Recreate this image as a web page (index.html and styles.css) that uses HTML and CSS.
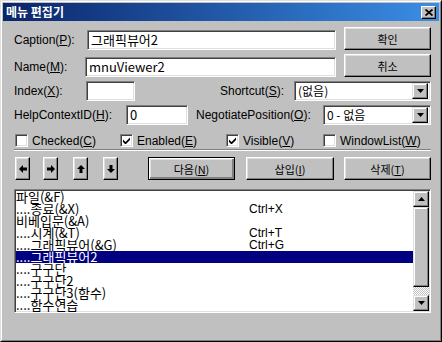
FILE: index.html
```html
<!DOCTYPE html>
<html>
<head>
	<meta charset="UTF-8">
	<title>메뉴 편집기</title>
	<link rel="stylesheet" href="styles.css">
</head>
<body>
<div class="window">
<div class="frame">

	<div class="titlebar">
		<span class="title">메뉴 편집기</span>
		<span class="close"><svg width="8" height="7" viewBox="0 0 8 7"><path d="M0.5 0.5 L7.5 6.5 M7.5 0.5 L0.5 6.5" stroke="#000" stroke-width="1.8"/></svg></span>
	</div>

	<div class="content">

		<div class="row top">
			<span class="lbl w-cap">Caption(<u>P</u>):</span>
			<div class="edit e-cap">그래픽뷰어2</div>
			<div class="btn b-side">확인</div>
		</div>

		<div class="row top r2">
			<span class="lbl w-name">Name(<u>M</u>):</span>
			<div class="edit e-name">mnuViewer2</div>
			<div class="btn b-side">취소</div>
		</div>

		<div class="row mid r3">
			<span class="lbl w-idx">Index(<u>X</u>):</span>
			<div class="edit e-idx"></div>
			<span class="lbl w-short">Shortcut(<u>S</u>):</span>
			<div class="edit combo c-short"><span class="val">(없음)</span><span class="drop"><svg width="7" height="4" viewBox="0 0 7 4"><polygon points="0,0 7,0 3.5,4" fill="#000"/></svg></span></div>
		</div>

		<div class="row mid r4">
			<span class="lbl w-help">HelpContextID(<u>H</u>):</span>
			<div class="edit e-help">0</div>
			<span class="lbl w-neg">NegotiatePosition(<u>O</u>):</span>
			<div class="edit combo c-neg"><span class="val">0 - 없음</span><span class="drop"><svg width="7" height="4" viewBox="0 0 7 4"><polygon points="0,0 7,0 3.5,4" fill="#000"/></svg></span></div>
		</div>

		<div class="row checks">
			<label class="chk k1"><span class="box"></span>Checked(<u>C</u>)</label>
			<label class="chk k2"><span class="box"><svg width="7" height="7" viewBox="0 0 7 7"><polygon points="0,2.5 2.5,5 7,0.5 7,3 2.5,7.5 0,5" fill="#000"/></svg></span>Enabled(<u>E</u>)</label>
			<label class="chk k3"><span class="box"><svg width="7" height="7" viewBox="0 0 7 7"><polygon points="0,2.5 2.5,5 7,0.5 7,3 2.5,7.5 0,5" fill="#000"/></svg></span>Visible(<u>V</u>)</label>
			<label class="chk k4"><span class="box"></span>WindowList(<u>W</u>)</label>
		</div>

		<div class="sep"></div>

		<div class="row buttons">
			<div class="btn arrow a1"><svg width="8" height="8" viewBox="0 0 8 8"><polygon points="0,4 4,0 4,2.5 8,2.5 8,5.5 4,5.5 4,8" fill="#000"/></svg></div>
			<div class="btn arrow a2"><svg class="rot-r" width="8" height="8" viewBox="0 0 8 8"><polygon points="0,4 4,0 4,2.5 8,2.5 8,5.5 4,5.5 4,8" fill="#000"/></svg></div>
			<div class="btn arrow a3"><svg class="rot-u" width="8" height="8" viewBox="0 0 8 8"><polygon points="0,4 4,0 4,2.5 8,2.5 8,5.5 4,5.5 4,8" fill="#000"/></svg></div>
			<div class="btn arrow a4"><svg class="rot-d" width="8" height="8" viewBox="0 0 8 8"><polygon points="0,4 4,0 4,2.5 8,2.5 8,5.5 4,5.5 4,8" fill="#000"/></svg></div>
			<div class="btn def b-next">다음(<u>N</u>)</div>
			<div class="btn b-ins">삽입(<u>I</u>)</div>
			<div class="btn b-del">삭제(<u>T</u>)</div>
		</div>

		<div class="list">
			<div class="items">
				<div class="item"><span class="cap">파일(&amp;F)</span></div>
				<div class="item"><span class="cap">....종료(&amp;X)</span><span class="key">Ctrl+X</span></div>
				<div class="item"><span class="cap">비베입문(&amp;A)</span></div>
				<div class="item"><span class="cap">....시계(&amp;T)</span><span class="key">Ctrl+T</span></div>
				<div class="item"><span class="cap">....그래픽뷰어(&amp;G)</span><span class="key">Ctrl+G</span></div>
				<div class="item sel"><span class="cap">....그래픽뷰어2</span></div>
				<div class="item"><span class="cap">....구구단</span></div>
				<div class="item"><span class="cap">....구구단2</span></div>
				<div class="item"><span class="cap">....구구단3(함수)</span></div>
				<div class="item"><span class="cap">....함수연습</span></div>
			</div>
			<div class="vscroll">
				<div class="sbtn"><svg width="7" height="4" viewBox="0 0 7 4"><polygon points="0,4 7,4 3.5,0" fill="#000"/></svg></div>
				<div class="thumb"></div>
				<div class="track"></div>
				<div class="sbtn"><svg width="7" height="4" viewBox="0 0 7 4"><polygon points="0,0 7,0 3.5,4" fill="#000"/></svg></div>
			</div>
		</div>

	</div>
</div>
</div>
</body>
</html>
```

FILE: styles.css
```css
body {
	margin: 0;
	font-family: "Liberation Sans", "Noto Sans CJK KR", sans-serif;
	font-size: 12px;
	color: #000;
}

.window {
	width: 442px;
	height: 342px;
	box-sizing: border-box;
	border: 1px solid;
	border-color: #dfdfdf #000 #000 #dfdfdf;
	background: #c0c0c0;
}

.frame {
	height: 100%;
	box-sizing: border-box;
	border: 1px solid;
	border-color: #fff #808080 #808080 #fff;
	padding: 1px;
}

/* title */
.titlebar {
	height: 18px;
	display: flex;
	align-items: center;
	justify-content: space-between;
	padding: 0 3px 0 3px;
	background: linear-gradient(to right, #0a246a, #3a8ee6);
	color: #fff;
}

.title {
	font-family: "Noto Sans CJK KR", sans-serif;
	font-weight: bold;
	font-size: 12px;
	line-height: 18px;
}

.close {
	width: 15px;
	height: 13px;
	box-sizing: border-box;
	display: flex;
	align-items: center;
	justify-content: center;
	background: #c0c0c0;
	border: 1px solid;
	border-color: #fff #000 #000 #fff;
	box-shadow: inset -1px -1px #808080;
}

/* common controls */
.content {
	padding: 6px 8px 0 11px;
}

.row {
	display: flex;
}

.lbl {
	white-space: nowrap;
}

.edit {
	box-sizing: border-box;
	height: 20px;
	background: #fff;
	border: 1px solid;
	border-color: #808080 #fff #fff #808080;
	box-shadow: inset 1px 1px #404040, inset -1px -1px #dfdfdf;
	padding-left: 3px;
	line-height: 18px;
	font-family: "Noto Sans CJK KR", "Liberation Sans", sans-serif;
	font-size: 13px;
	white-space: nowrap;
	overflow: hidden;
}

.btn {
	box-sizing: border-box;
	height: 23px;
	background: #c0c0c0;
	border: 1px solid;
	border-color: #fff #000 #000 #fff;
	box-shadow: inset -1px -1px #808080, inset 1px 1px #dfdfdf;
	display: flex;
	align-items: center;
	justify-content: center;
	font-family: "Noto Sans CJK KR", "Liberation Sans", sans-serif;
	font-size: 11px;
}

.btn.def {
	border-color: #000;
	box-shadow: inset 1px 1px #fff, inset -2px -2px #808080, inset 2px 2px #dfdfdf;
}

/* rows */
.row.top {
	height: 23px;
}

.row.top .lbl {
	margin-top: 3px;
	line-height: 20px;
}

.row.top .edit {
	margin-top: 3px;
}

.r2 {
	margin-top: 4px;
}

.w-cap { width: 73px; }
.e-cap { width: 249px; }
.w-name { width: 71px; }
.e-name { width: 251px; }

.b-side {
	width: 87px;
	margin-left: 8px;
}

.row.mid {
	height: 20px;
	align-items: center;
}

.r3 { margin-top: 4px; }
.r4 { margin-top: 4px; }

.w-idx { width: 72px; }
.e-idx { width: 49px; }
.w-short { width: 74px; margin-left: 85px; }
.c-short { width: 137px; }

.w-help { width: 112px; }
.e-help { width: 62px; }
.w-neg { width: 127px; margin-left: 8px; }
.c-neg { width: 108px; }

.combo {
	display: flex;
	justify-content: space-between;
	padding-right: 2px;
	font-size: 12px;
}

.drop {
	width: 16px;
	height: 16px;
	margin-top: 1px;
	box-sizing: border-box;
	background: #c0c0c0;
	border: 1px solid;
	border-color: #dfdfdf #000 #000 #dfdfdf;
	box-shadow: inset -1px -1px #808080, inset 1px 1px #fff;
	display: flex;
	align-items: center;
	justify-content: center;
}

/* check boxes */
.checks {
	margin-top: 9px;
	height: 13px;
	align-items: center;
}

.chk {
	display: flex;
	align-items: center;
	white-space: nowrap;
}

.k1 { margin-left: 1px; width: 105px; }
.k2 { width: 106px; }
.k3 { width: 97px; }

.box {
	width: 13px;
	height: 13px;
	box-sizing: border-box;
	margin-right: 4px;
	background: #fff;
	border: 1px solid;
	border-color: #808080 #fff #fff #808080;
	box-shadow: inset 1px 1px #404040, inset -1px -1px #dfdfdf;
	display: flex;
	align-items: center;
	justify-content: center;
}

.sep {
	margin-top: 2px;
	height: 1px;
	background: #808080;
	border-bottom: 1px solid #fff;
}

/* buttons row */
.buttons {
	margin-top: 6px;
}

.arrow {
	width: 15px;
}

.a1 { margin-left: 1px; }
.a2 { margin-left: 13px; }
.a3 { margin-left: 15px; }
.a4 { margin-left: 15px; }

.rot-r { transform: rotate(180deg); }
.rot-u { transform: rotate(90deg); }
.rot-d { transform: rotate(-90deg); }

.b-next { width: 87px; margin-left: 30px; }
.b-ins { width: 88px; margin-left: 11px; }
.b-del { width: 87px; margin-left: 10px; }

/* list */
.list {
	margin-top: 9px;
	height: 124px;
	box-sizing: border-box;
	display: flex;
	background: #fff;
	border: 1px solid;
	border-color: #808080 #fff #fff #808080;
	box-shadow: inset 1px 1px #404040, inset -1px -1px #dfdfdf;
	padding: 1px;
}

.items {
	flex: 1;
	font-family: "Noto Sans CJK KR", "Liberation Sans", sans-serif;
	font-size: 13px;
}

.item {
	height: 12px;
	line-height: 12px;
	display: flex;
	white-space: nowrap;
}

.item .cap {
	width: 233px;
}

.item .key {
	font-family: "Liberation Sans", sans-serif;
	font-size: 12px;
}

.item.sel {
	background: #000080;
	color: #fff;
}

.vscroll {
	width: 16px;
	display: flex;
	flex-direction: column;
}

.sbtn {
	height: 16px;
	box-sizing: border-box;
	background: #c0c0c0;
	border: 1px solid;
	border-color: #dfdfdf #000 #000 #dfdfdf;
	box-shadow: inset -1px -1px #808080, inset 1px 1px #fff;
	display: flex;
	align-items: center;
	justify-content: center;
}

.thumb {
	height: 80px;
	box-sizing: border-box;
	background: #c0c0c0;
	border: 1px solid;
	border-color: #dfdfdf #000 #000 #dfdfdf;
	box-shadow: inset -1px -1px #808080, inset 1px 1px #fff;
}

.track {
	flex: 1;
	background: repeating-conic-gradient(#fff 0 25%, #c0c0c0 0 50%) 0 0 / 2px 2px;
}
```
